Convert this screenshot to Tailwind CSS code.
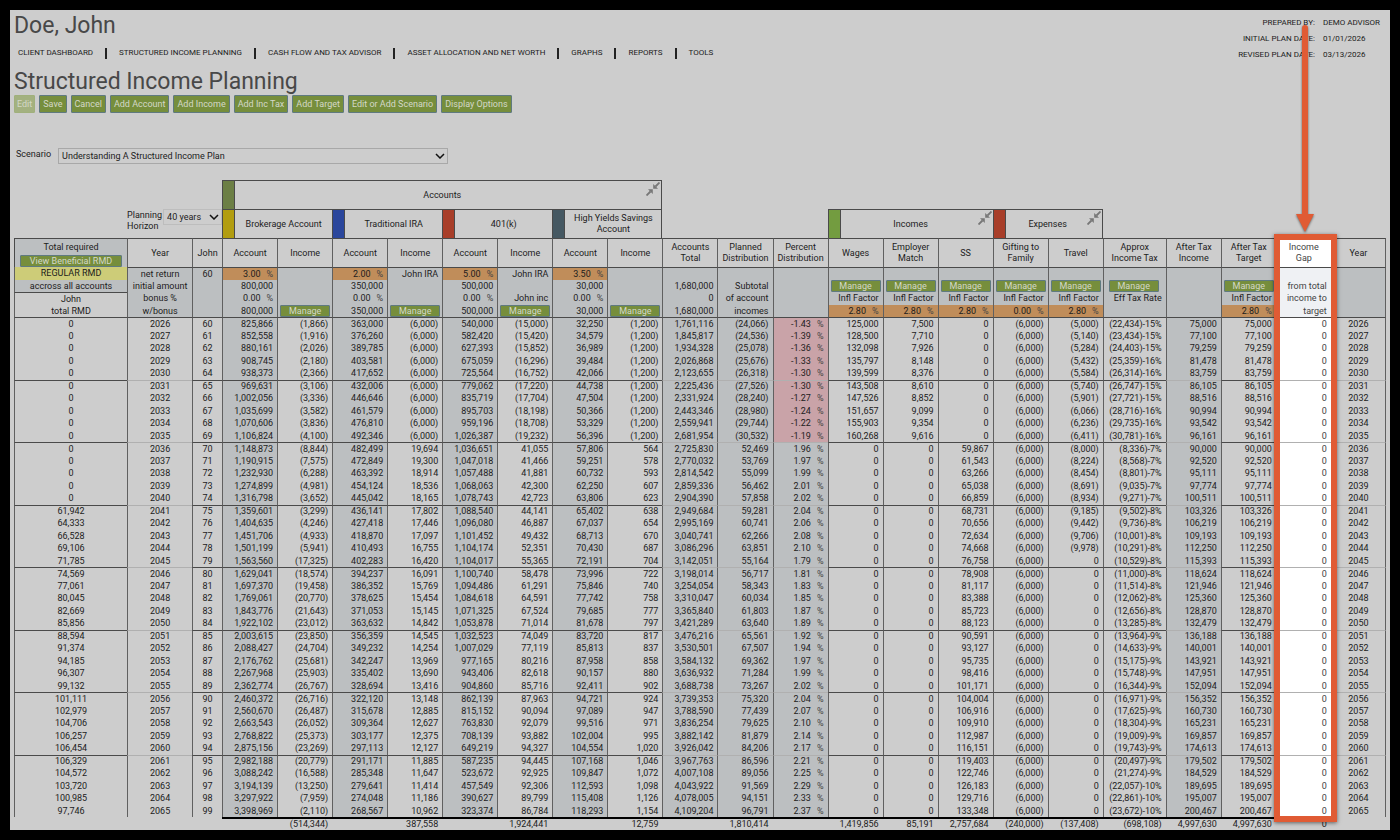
<!DOCTYPE html>
<html lang="en">
  <head>
    <meta charset="UTF-8" />
    <meta name="viewport" content="width=device-width, initial-scale=1.0" />
    <title>Structured Income Planning - Doe, John</title>
    <script src="https://cdn.jsdelivr.net/npm/@tailwindcss/browser@4"></script>
  </head>
  <body class="bg-black p-[10px] font-[Roboto,sans-serif] text-[9px] text-[#1c1c1c]">
    <svg class="hidden">
      <symbol id="collapse" viewBox="0 0 14 14">
        <path d="M13.5 .5 9.5 4.5M.5 13.5l4-4" stroke="#777" stroke-width="1.8" fill="none" />
        <path d="M7.2 6.8V2l4.8 4.8zM6.8 7.2V12L2 7.2z" fill="#777" />
      </symbol>
      <symbol id="chevron" viewBox="0 0 10 6">
        <path d="M1 1l4 4 4-4" stroke="#111" stroke-width="1.5" fill="none" />
      </symbol>
    </svg>

    <main class="relative bg-[#cdcdcd] px-1">
      <header class="flex justify-between">
        <div>
          <h1 class="pt-[2px] text-[23px] leading-[28px] text-[#484848]">Doe, John</h1>
          <nav class="flex h-[26px] items-center gap-3 pl-1 text-[8px]">
            <a href="#">CLIENT DASHBOARD</a>
            <span class="h-[11px] w-[2px] bg-[#222]"></span>
            <a href="#">STRUCTURED INCOME PLANNING</a>
            <span class="h-[11px] w-[2px] bg-[#222]"></span>
            <a href="#">CASH FLOW AND TAX ADVISOR</a>
            <span class="h-[11px] w-[2px] bg-[#222]"></span>
            <a href="#">ASSET ALLOCATION AND NET WORTH</a>
            <span class="h-[11px] w-[2px] bg-[#222]"></span>
            <a href="#">GRAPHS</a>
            <span class="h-[11px] w-[2px] bg-[#222]"></span>
            <a href="#">REPORTS</a>
            <span class="h-[11px] w-[2px] bg-[#222]"></span>
            <a href="#">TOOLS</a>
          </nav>
          <h2 class="pt-[2px] text-[23px] leading-[27px] text-[#484848]">Structured Income Planning</h2>
        </div>
        <dl class="grid grid-cols-[auto_auto] content-start gap-x-2 pt-[5px] pr-[6px] text-[8px] leading-[16px]">
          <dt class="text-right">PREPARED BY:</dt>
          <dd>DEMO ADVISOR</dd>
          <dt class="text-right">INITIAL PLAN DATE:</dt>
          <dd>01/01/2026</dd>
          <dt class="text-right">REVISED PLAN DATE:</dt>
          <dd>03/13/2026</dd>
        </dl>
      </header>

      <div class="flex gap-1 leading-[16px] text-[#d4d8c8]">
        <button type="button" disabled class="rounded-[1px] border border-[#a0b07c] bg-[#a3b180] px-[2px]">Edit</button>
        <button type="button" class="rounded-[1px] border border-[#5f7a80] bg-[#768e3c] px-[3px]">Save</button>
        <button type="button" class="rounded-[1px] border border-[#5f7a80] bg-[#768e3c] px-[3px]">Cancel</button>
        <button type="button" class="rounded-[1px] border border-[#5f7a80] bg-[#768e3c] px-[3px]">Add Account</button>
        <button type="button" class="rounded-[1px] border border-[#5f7a80] bg-[#768e3c] px-[3px]">Add Income</button>
        <button type="button" class="rounded-[1px] border border-[#5f7a80] bg-[#768e3c] px-[3px]">Add Inc Tax</button>
        <button type="button" class="rounded-[1px] border border-[#5f7a80] bg-[#768e3c] px-[3px]">Add Target</button>
        <button type="button" class="rounded-[1px] border border-[#5f7a80] bg-[#768e3c] px-[3px]">Edit or Add Scenario</button>
        <button type="button" class="rounded-[1px] border border-[#5f7a80] bg-[#768e3c] px-[3px]">Display Options</button>
      </div>

      <div class="mt-[35px] flex gap-[7px] pl-[2px]">
        <label for="scenario" class="leading-[12px]">Scenario</label>
        <div class="relative">
          <select id="scenario" class="h-4 w-[390px] appearance-none border border-[#a8a8a8] px-[3px] leading-[14px]">
            <option>Understanding A Structured Income Plan</option>
          </select>
          <svg class="pointer-events-none absolute top-[5px] right-[3px] h-[6px] w-[10px]"><use href="#chevron" /></svg>
        </div>
      </div>

      <table class="mt-4 w-full table-fixed border-separate border-spacing-0 leading-[11px]">
        <colgroup>
          <col class="w-[113px]" />
          <col class="w-[65px]" />
          <col class="w-[30px]" />
          <col span="16" class="w-[55px]" />
          <col class="w-[63px]" />
          <col span="4" class="w-[55px]" />
        </colgroup>
        <thead>
          <tr>
            <td colspan="3"></td>
            <th colspan="8" class="border-t border-x border-[#4a4a4a] p-0 font-normal">
              <div class="relative flex h-7 items-center justify-center">
                <span class="absolute inset-y-0 left-0 w-3 border-r border-[#4a4a4a] bg-[#6c7f45]"></span>
                Accounts
                <button type="button" aria-label="Collapse accounts" class="absolute top-px right-px"><svg class="size-[14px]"><use href="#collapse" /></svg></button>
              </div>
            </th>
            <td colspan="13"></td>
          </tr>
          <tr>
            <td colspan="3" class="p-0 align-top">
              <div class="flex justify-end">
                <label for="horizon" class="w-9 pt-px text-left">Planning Horizon</label>
                <div class="relative">
                  <select id="horizon" class="h-4 w-[59px] appearance-none border border-[#bdbdbd] px-[3px] leading-[14px]">
                    <option>40 years</option>
                  </select>
                  <svg class="pointer-events-none absolute top-[5px] right-[3px] h-[6px] w-[10px]"><use href="#chevron" /></svg>
                </div>
              </div>
            </td>
            <th colspan="2" class="border-t border-l border-[#4a4a4a] p-0 font-normal">
              <div class="flex h-7 items-center">
                <span class="h-7 w-3 border-r border-[#4a4a4a] bg-[#b29d10]"></span>
                <span class="flex-1">Brokerage Account</span>
              </div>
            </th>
            <th colspan="2" class="border-t border-l border-[#4a4a4a] p-0 font-normal">
              <div class="flex h-7 items-center">
                <span class="h-7 w-3 border-r border-[#4a4a4a] bg-[#2a469c]"></span>
                <span class="flex-1">Traditional IRA</span>
              </div>
            </th>
            <th colspan="2" class="border-t border-l border-[#4a4a4a] p-0 font-normal">
              <div class="flex h-7 items-center">
                <span class="h-7 w-3 border-r border-[#4a4a4a] bg-[#a83e29]"></span>
                <span class="flex-1">401(k)</span>
              </div>
            </th>
            <th colspan="2" class="border-t border-x border-[#4a4a4a] p-0 font-normal">
              <div class="flex h-7 items-center">
                <span class="h-7 w-3 border-r border-[#4a4a4a] bg-[#455862]"></span>
                <span class="flex-1">High Yields Savings<br />Account</span>
              </div>
            </th>
            <td colspan="3"></td>
            <th colspan="3" class="border-t border-l border-[#4a4a4a] p-0 font-normal">
              <div class="relative flex h-7 items-center justify-center">
                <span class="absolute inset-y-0 left-0 w-3 border-r border-[#4a4a4a] bg-[#739c40]"></span>
                Incomes
                <button type="button" aria-label="Collapse incomes" class="absolute top-px right-px"><svg class="size-[14px]"><use href="#collapse" /></svg></button>
              </div>
            </th>
            <th colspan="2" class="border-t border-x border-[#4a4a4a] p-0 font-normal">
              <div class="relative flex h-7 items-center justify-center">
                <span class="absolute inset-y-0 left-0 w-3 border-r border-[#4a4a4a] bg-[#a83e29]"></span>
                Expenses
                <button type="button" aria-label="Collapse expenses" class="absolute top-px right-px"><svg class="size-[14px]"><use href="#collapse" /></svg></button>
              </div>
            </th>
            <td colspan="5"></td>
          </tr>
          <tr id="columnTitles"></tr>
        </thead>
        <tbody id="setupRows"></tbody>
        <tbody id="planRows"></tbody>
        <tfoot>
          <tr id="totalsRow"></tr>
        </tfoot>
      </table>

      <div class="pointer-events-none absolute top-[224px] right-[53px] bottom-[8px] w-[63px] border-[6px] border-[#e05b34] shadow-[0_1px_4px_#0008]"></div>
      <svg class="pointer-events-none absolute top-[15px] right-[75px] h-[210px] w-[20px] drop-shadow-[0_1px_1px_#0008]" viewBox="0 0 20 210">
        <path d="M10 3v188" stroke="#e05b34" stroke-width="6" stroke-linecap="round" />
        <path d="M1 189h18l-9 18z" fill="#e05b34" />
      </svg>
    </main>

    <script>
      const rmd = [0, 0, 0, 0, 0, 0, 0, 0, 0, 0, 0, 0, 0, 0, 0, 61942, 64333, 66528, 69106, 71785, 74569, 77061, 80045, 82669, 85856, 88594, 91374, 94185, 96307, 99132, 101111, 102979, 104706, 106257, 106454, 106329, 104572, 103720, 100985, 97746];
      const brokerage = [825866, 852558, 880161, 908745, 938373, 969631, 1002056, 1035699, 1070606, 1106824, 1148873, 1190915, 1232930, 1274899, 1316798, 1359601, 1404635, 1451706, 1501199, 1563560, 1629041, 1697370, 1769061, 1843776, 1922102, 2003615, 2088427, 2176762, 2267968, 2362774, 2460372, 2560670, 2663543, 2768822, 2875156, 2982188, 3088242, 3194139, 3297922, 3398969];
      const brokerageInc = [-1866, -1916, -2026, -2180, -2366, -3106, -3336, -3582, -3836, -4100, -8844, -7575, -6288, -4981, -3652, -3299, -4246, -4933, -5941, -17325, -18574, -19458, -20770, -21643, -23012, -23850, -24704, -25681, -25903, -26767, -26716, -26487, -26052, -25373, -23269, -20779, -16588, -13250, -7959, -2110];
      const ira = [363000, 376260, 389785, 403581, 417652, 432006, 446646, 461579, 476810, 492346, 482499, 472849, 463392, 454124, 445042, 436141, 427418, 418870, 410493, 402283, 394237, 386352, 378625, 371053, 363632, 356359, 349232, 342247, 335402, 328694, 322120, 315678, 309364, 303177, 297113, 291171, 285348, 279641, 274048, 268567];
      const iraInc = [-6000, -6000, -6000, -6000, -6000, -6000, -6000, -6000, -6000, -6000, 19694, 19300, 18914, 18536, 18165, 17802, 17446, 17097, 16755, 16420, 16091, 15769, 15454, 15145, 14842, 14545, 14254, 13969, 13690, 13416, 13148, 12885, 12627, 12375, 12127, 11885, 11647, 11414, 11186, 10962];
      const k401 = [540000, 582420, 627393, 675059, 725564, 779062, 835719, 895703, 959196, 1026387, 1036651, 1047018, 1057488, 1068063, 1078743, 1088540, 1096080, 1101452, 1104174, 1104017, 1100740, 1094486, 1084618, 1071325, 1053878, 1032523, 1007029, 977165, 943406, 904860, 862139, 815152, 763830, 708139, 649219, 587235, 523672, 457549, 390627, 323374];
      const k401Inc = [-15000, -15420, -15852, -16296, -16752, -17220, -17704, -18198, -18708, -19232, 41055, 41466, 41881, 42300, 42723, 44141, 46887, 49432, 52351, 55365, 58478, 61291, 64591, 67524, 71014, 74049, 77119, 80216, 82618, 85716, 87963, 90094, 92079, 93882, 94327, 94445, 92925, 92306, 89799, 86784];
      const savings = [32250, 34579, 36989, 39484, 42066, 44738, 47504, 50366, 53329, 56396, 57806, 59251, 60732, 62250, 63806, 65402, 67037, 68713, 70430, 72191, 73996, 75846, 77742, 79685, 81678, 83720, 85813, 87958, 90157, 92411, 94721, 97089, 99516, 102004, 104554, 107168, 109847, 112593, 115408, 118293];
      const savingsInc = [-1200, -1200, -1200, -1200, -1200, -1200, -1200, -1200, -1200, -1200, 564, 578, 593, 607, 623, 638, 654, 670, 687, 704, 722, 740, 758, 777, 797, 817, 837, 858, 880, 902, 924, 947, 971, 995, 1020, 1046, 1072, 1098, 1126, 1154];
      const total = [1761116, 1845817, 1934328, 2026868, 2123655, 2225436, 2331924, 2443346, 2559941, 2681954, 2725830, 2770032, 2814542, 2859336, 2904390, 2949684, 2995169, 3040741, 3086296, 3142051, 3198014, 3254054, 3310047, 3365840, 3421289, 3476216, 3530501, 3584132, 3636932, 3688738, 3739353, 3788590, 3836254, 3882142, 3926042, 3967763, 4007108, 4043922, 4078005, 4109204];
      const planned = [-24066, -24536, -25078, -25676, -26318, -27526, -28240, -28980, -29744, -30532, 52469, 53769, 55099, 56462, 57858, 59281, 60741, 62266, 63851, 55164, 56717, 58343, 60034, 61803, 63640, 65561, 67507, 69362, 71284, 73267, 75320, 77439, 79625, 81879, 84206, 86596, 89056, 91569, 94151, 96791];
      const percent = [-1.43, -1.39, -1.36, -1.33, -1.3, -1.3, -1.27, -1.24, -1.22, -1.19, 1.96, 1.97, 1.99, 2.01, 2.02, 2.04, 2.06, 2.08, 2.1, 1.79, 1.81, 1.83, 1.85, 1.87, 1.89, 1.92, 1.94, 1.97, 1.99, 2.02, 2.04, 2.07, 2.1, 2.14, 2.17, 2.21, 2.25, 2.29, 2.33, 2.37];
      const wages = [125000, 128500, 132098, 135797, 139599, 143508, 147526, 151657, 155903, 160268];
      const match = [7500, 7710, 7926, 8148, 8376, 8610, 8852, 9099, 9354, 9616];
      const ss = [0, 0, 0, 0, 0, 0, 0, 0, 0, 0, 59867, 61543, 63266, 65038, 66859, 68731, 70656, 72634, 74668, 76758, 78908, 81117, 83388, 85723, 88123, 90591, 93127, 95735, 98416, 101171, 104004, 106916, 109910, 112987, 116151, 119403, 122746, 126183, 129716, 133348];
      const travel = [-5000, -5140, -5284, -5432, -5584, -5740, -5901, -6066, -6236, -6411, -8000, -8224, -8454, -8691, -8934, -9185, -9442, -9706, -9978];
      const tax = [-22434, -23434, -24403, -25359, -26314, -26747, -27721, -28716, -29735, -30781, -8336, -8568, -8801, -9035, -9271, -9502, -9736, -10001, -10291, -10529, -11000, -11514, -12062, -12656, -13285, -13964, -14633, -15175, -15748, -16344, -16971, -17625, -18304, -19009, -19743, -20497, -21274, -22057, -22861, -23672];
      const taxRate = [15, 15, 15, 16, 16, 15, 15, 16, 16, 16, 7, 7, 7, 7, 7, 8, 8, 8, 8, 8, 8, 8, 8, 8, 8, 9, 9, 9, 9, 9, 9, 9, 9, 9, 9, 9, 9, 10, 10, 10];
      const target = [75000, 77100, 79259, 81478, 83759, 86105, 88516, 90994, 93542, 96161, 90000, 92520, 95111, 97774, 100511, 103326, 106219, 109193, 112250, 115393, 118624, 121946, 125360, 128870, 132479, 136188, 140001, 143921, 147951, 152094, 156352, 160730, 165231, 169857, 174613, 179502, 184529, 189695, 195007, 200467];

      const shadedColumns = [3, 5, 7, 9, 11, 12, 13, 20];
      const faintLineColumns = [1, 11, 12, 13, 20, 22, 23];
      const centeredColumns = [0, 1, 2, 23];
      const GAP = 22;

      function money(n) {
        n = n || 0;
        return n < 0 ? `(${Math.abs(n).toLocaleString("en-US")})` : n.toLocaleString("en-US");
      }

      function rate(n) {
        return `${n}<span class="ml-[6px] text-[#444]">%</span>`;
      }

      function manage(text) {
        return `<button type="button" class="block h-[12px] w-full rounded-[1px] border border-[#5f7a80] bg-[#768e3c] text-center leading-[10px] text-[#d4d8c8]">${text}</button>`;
      }

      function align(col) {
        if (centeredColumns.includes(col)) return "text-center";
        return "text-right pr-1";
      }

      function edge(col) {
        return col == 23 ? "border-x border-x-[#606060]" : "border-l border-l-[#606060]";
      }

      // column titles
      const titles = ["", "Year", "John", "Account", "Income", "Account", "Income", "Account", "Income", "Account", "Income", "Accounts<br />Total", "Planned<br />Distribution", "Percent<br />Distribution", "Wages", "Employer<br />Match", "SS", "Gifting to<br />Family", "Travel", "Approx<br />Income Tax", "After Tax<br />Income", "After Tax<br />Target", "Income<br />Gap", "Year"];

      document.getElementById("columnTitles").innerHTML = titles
        .map(function (title, col) {
          if (col == 0) {
            return `<th class="border-t border-l border-[#4a4a4a] bg-[#bcbfc1] px-[5px] py-0 align-bottom font-normal"><div class="h-[15px] leading-[15px]">Total required</div>${manage("View Beneficial RMD")}</th>`;
          }
          const bg = col == GAP ? "bg-white text-[#444]" : "";
          return `<th class="h-[29px] border-t border-t-[#4a4a4a] p-0 font-normal ${edge(col)} ${bg}">${title}</th>`;
        })
        .join("");

      // return, starting amount, bonus and inflation settings: one array per column
      const m = manage("Manage");
      const infl = ["", m, "Infl Factor", "*2.80"];
      const setup = [
        ["REGULAR RMD", "accross all accounts", "John", "total RMD"],
        ["net return", "initial amount", "bonus %", "w/bonus"],
        ["60", "", "", ""],
        ["*3.00", "800,000", rate("0.00"), "800,000"],
        ["", "", "", m],
        ["*2.00", "350,000", rate("0.00"), "350,000"],
        ["John IRA", "", "", m],
        ["*5.00", "500,000", rate("0.00"), "500,000"],
        ["John IRA", "", "John inc", m],
        ["*3.50", "30,000", rate("0.00"), "30,000"],
        ["", "", "", m],
        ["", "1,680,000", "0", "1,680,000"],
        ["", "Subtotal", "of account", "incomes"],
        ["", "", "", ""],
        infl,
        infl,
        infl,
        ["", m, "Infl Factor", "*0.00"],
        infl,
        ["", m, "Eff Tax Rate", ""],
        ["", "", "", ""],
        infl,
        ["", "from total", "income to", "target"],
        ["", "", "", ""],
      ];

      let setupHTML = "";
      for (let line = 0; line < 4; line++) {
        setupHTML += line % 2 == 0 ? '<tr class="h-[13px]">' : '<tr class="h-[12px]">';
        setup.forEach(function (column, col) {
          let text = column[line];
          let bg = "bg-[#bcbfc1]";
          let pad = align(col);
          let top = line == 0 ? "border-t border-t-[#4a4a4a]" : "";
          if (col == 0 && line == 0) {
            bg = "bg-[#cdcc78]";
            top = "";
          }
          if (col == 0 && line > 1) bg = "";
          if (col == 0 && line == 2) top = "border-t border-t-[#4a4a4a]";
          if (col == GAP) bg = "bg-[#eff1f4] text-[#444]";
          if (text[0] == "*") {
            bg = "bg-[#c08d5a]";
            text = rate(text.slice(1));
          }
          if (text == m) pad = col == 19 ? "pl-[5px] pr-[7px]" : "px-[2px]";
          setupHTML += `<td class="py-0 whitespace-nowrap ${col == 0 || text == m || centeredColumns.includes(col) ? "px-0" : "pl-0"} ${edge(col)} ${top} ${bg} ${pad}">${text}</td>`;
        });
        setupHTML += "</tr>";
      }
      document.getElementById("setupRows").innerHTML = setupHTML;

      // yearly rows, ruled off every five years
      let planHTML = "";
      for (let i = 0; i < 40; i++) {
        const cells = [
          money(rmd[i]), 2026 + i, 60 + i,
          money(brokerage[i]), money(brokerageInc[i]),
          money(ira[i]), money(iraInc[i]),
          money(k401[i]), money(k401Inc[i]),
          money(savings[i]), money(savingsInc[i]),
          money(total[i]), money(planned[i]), rate(percent[i].toFixed(2)),
          money(wages[i]), money(match[i]), money(ss[i]),
          money(-6000), money(travel[i]),
          `${money(tax[i])}-${taxRate[i]}%`,
          money(target[i]), money(target[i]), 0, 2026 + i,
        ];
        planHTML += i % 2 == 0 ? '<tr class="h-[13px]">' : '<tr class="h-[12px]">';
        cells.forEach(function (text, col) {
          let top = "";
          if (i == 0) top = "border-t border-t-[#4a4a4a]";
          else if (i % 5 == 0) top = faintLineColumns.includes(col) ? "border-t border-t-[#b0b0b0]" : "border-t border-t-[#4a4a4a]";
          let bg = shadedColumns.includes(col) ? "bg-[#bcbfc1]" : "";
          if (col == 13 && percent[i] < 0) bg = "bg-[#c9a3a8]";
          if (col == GAP) bg = "bg-white text-[#444]";
          planHTML += `<td class="py-0 pl-0 whitespace-nowrap ${edge(col)} ${top} ${bg} ${align(col)}">${text}</td>`;
        });
        planHTML += "</tr>";
      }
      document.getElementById("planRows").innerHTML = planHTML;

      // totals
      const totals = ["", "", "", "", "(514,344)", "", "387,558", "", "1,924,441", "", "12,759", "", "1,810,414", "", "1,419,856", "85,191", "2,757,684", "(240,000)", "(137,408)", "(698,108)", "4,997,630", "4,997,630", "0", ""];
      document.getElementById("totalsRow").innerHTML = totals
        .map(function (text, col) {
          const line = col > 2 && col < 23 ? "border-t-2 border-black" : "";
          return `<td class="h-[13px] py-0 pl-0 ${line} ${align(col)}">${text}</td>`;
        })
        .join("");
    </script>
  </body>
</html>
